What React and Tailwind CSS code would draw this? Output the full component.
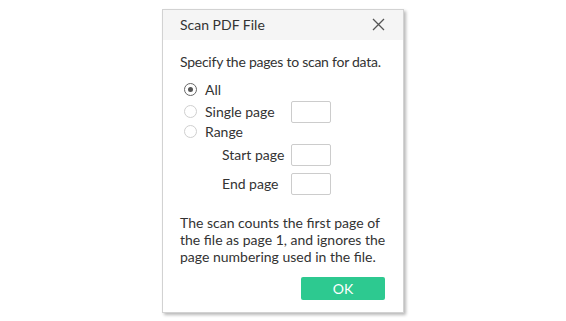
import React, { useState } from 'react';

function Radio({ checked, label, onClick }) {
  return (
    <div className="flex items-center h-[18px] cursor-pointer" onClick={onClick}>
      <span
        className={
          'ml-[4px] w-[13px] h-[13px] rounded-full border flex items-center justify-center bg-white ' +
          (checked ? 'border-[#666]' : 'border-[#cfcfcf]')
        }
      >
        {checked && <span className="w-[5px] h-[5px] rounded-full bg-[#555]" />}
      </span>
      <span className="ml-[8px]">{label}</span>
    </div>
  );
}

function PageBox() {
  return <input className="w-[40px] h-[22px] border border-[#cccccc] rounded-[2px] bg-white outline-none px-1 text-[13px]" />;
}

export default function App() {
  const [mode, setMode] = useState('all'); // 'all' | 'single' | 'range'

  return (
    <div className="h-[321px] w-full bg-white flex items-center justify-center font-['Lato','Open_Sans',sans-serif] text-[14px] text-[#333333]">
      <div className="w-[242px] h-[304px] bg-white border border-[#d2d2d2] shadow-[2px_2px_3px_rgba(0,0,0,0.28)] flex flex-col">
        {/* Cabecera */}
        <div className="h-[30px] bg-[#f5f5f5] flex items-center justify-between pl-[17px] pr-[18px] shrink-0">
          <span className="text-[14px] leading-[17px]">Scan PDF File</span>
          <svg width="13" height="13" viewBox="0 0 13 13" className="text-[#555]">
            <path d="M1 1L12 12M12 1L1 12" stroke="currentColor" strokeWidth="1.3" fill="none" />
          </svg>
        </div>

        {/* Cuerpo */}
        <div className="flex-1 flex flex-col px-[17px] pt-[13px] pb-[12px]">
          <p className="leading-[17px] whitespace-nowrap tracking-[-0.25px]">Specify the pages to scan for data.</p>

          <div className="mt-[11px] flex flex-col">
            <Radio checked={mode === 'all'} label="All" onClick={() => setMode('all')} />
            <div className="flex items-center justify-between mt-[2px] h-[22px]">
              <Radio checked={mode === 'single'} label="Single page" onClick={() => setMode('single')} />
              <div className="mr-[55px]"><PageBox /></div>
            </div>
            <Radio checked={mode === 'range'} label="Range" onClick={() => setMode('range')} />
            <div className="flex items-center justify-between mt-[3px] h-[22px] pl-[42px]">
              <span>Start page</span>
              <div className="mr-[55px]"><PageBox /></div>
            </div>
            <div className="flex items-center justify-between mt-[7px] h-[22px] pl-[42px]">
              <span>End page</span>
              <div className="mr-[55px]"><PageBox /></div>
            </div>
          </div>

          <p className="mt-[19px] leading-[17px]">
            The scan counts the first page of the file as page 1, and ignores the page numbering used in the file.
          </p>

          <div className="mt-auto flex justify-end">
            <button className="w-[84px] h-[23px] rounded-[2px] bg-[#2dc990] text-white text-[14px] mr-[1px]">OK</button>
          </div>
        </div>
      </div>
    </div>
  );
}
